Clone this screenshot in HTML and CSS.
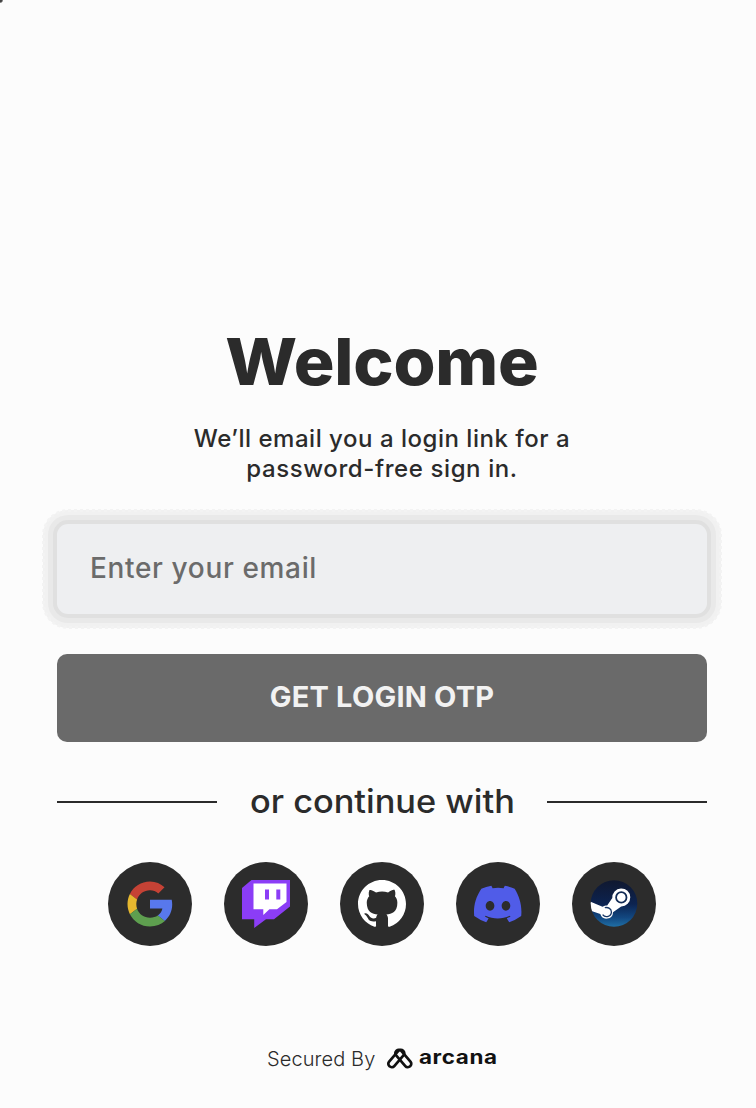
FILE: index.html
```html
<!DOCTYPE html>
<html lang="en">
<head>
<meta charset="utf-8">
<title>Welcome</title>
<link rel="stylesheet" href="styles.css">
</head>
<body>
<main class="login">
  <h1 class="title">Welcome</h1>
  <p class="subtitle"><span class="line-one">We’ll email you a login link for a</span><br><span class="line-two">password-free sign in.</span></p>
  <input class="email" type="email" placeholder="Enter your email" aria-label="Email">
  <button class="submit" type="button"><span>GET LOGIN OTP</span></button>
  <div class="divider"><span class="divider-text">or continue with</span></div>
  <div class="providers">
    <button class="provider" aria-label="Google">
      <svg width="48" height="48" viewBox="0 0 48 48">
        <path fill="#c54235" d="M24 10.2c3.2 0 6 1.1 8.3 3.300l6.200-6.200C34.800 3.800 29.800 1.500 24 1.500 15.200 1.500 7.600 6.500 3.900 13.900l7.200 5.600c1.700-5.400 6.900-9.300 12.900-9.300z"/>
        <path fill="#5878ec" d="M46.200 24.500c0-1.700-.2-3.300-.5-4.800H24v8.900h12.400c-.5 3-2.100 5.300-4.600 6.900l7 5.500c4.600-4.200 7.400-9.800 7.400-16.500z"/>
        <path fill="#e6b82f" d="M11.100 28.700c-.5-1.500-.8-3-.8-4.700s.3-3.200.8-4.600L3.900 13.900C2.400 16.900 1.500 20.300 1.500 24s.9 7.100 2.400 10.200z"/>
        <path fill="#5e9f4f" d="M24 46.500c6.100 0 11.200-2 14.900-5.400l-7.100-5.600c-2 1.400-4.500 2.200-7.800 2.200-6.100 0-11.200-3.800-12.900-9l-7.200 5.500C7.600 41.500 15.200 46.500 24 46.500z"/>
      </svg>
    </button>
    <button class="provider" aria-label="Twitch">
      <svg width="48" height="48" viewBox="0 0 48 48">
        <path fill="#8b3df6" d="M9.500 0H48v26.500L32 39.300h-8L12.200 48v-8.700H0V8z"/>
        <path fill="#fff" d="M11.500 3.500h33v18.500l-9.500 7.300h-7.600L21.300 35v-5.700h-9.800z"/>
        <path fill="#8b3df6" d="M23 9.500h4v10h-4zM34.300 9.500h4v10h-4z"/>
      </svg>
    </button>
    <button class="provider" aria-label="GitHub">
      <svg width="48" height="48" viewBox="0 0 16 16">
        <path fill="#fff" d="M8 0C3.580 0 0 3.580 0 8c0 3.540 2.290 6.530 5.470 7.590.4.070.55-.17.55-.38 0-.19-.01-.82-.01-1.490-2.010.37-2.530-.49-2.690-.94-.09-.23-.48-.94-.82-1.130-.28-.15-.68-.52-.01-.53.63-.01 1.080.58 1.230.82.720 1.210 1.870.870 2.330.660.070-.52.280-.87.510-1.070-1.780-.2-3.640-.89-3.640-3.950 0-.87.310-1.590.820-2.150-.08-.2-.36-1.020.080-2.120 0 0 .67-.21 2.200.820.640-.18 1.320-.27 2-.27s1.360.09 2 .27c1.530-1.040 2.200-.82 2.200-.82.440 1.100.160 1.920.080 2.120.510.560.820 1.270.820 2.150 0 3.070-1.870 3.750-3.650 3.950.290.250.540.730.540 1.480 0 1.070-.01 1.930-.01 2.200 0 .210.150.460.550.380A8.010 8.010 0 0 0 16 8c0-4.420-3.580-8-8-8z"/>
      </svg>
    </button>
    <button class="provider" aria-label="Discord">
      <svg width="48" height="48" viewBox="0 0 24 24">
        <path fill="#505ce8" d="M20.317 4.370a19.800 19.800 0 0 0-4.885-1.515c-.27.37-.47.86-.64 1.250a18.300 18.300 0 0 0-5.500 0c-.16-.4-.37-.88-.63-1.250A19.700 19.700 0 0 0 3.677 4.370C.533 9.046-.32 13.580.1 18.058a19.900 19.900 0 0 0 6 3.030c.46-.63.87-1.300 1.220-2a13 13 0 0 1-1.870-.89l.37-.3c3.930 1.800 8.180 1.800 12.060 0l.38.3c-.6.350-1.220.640-1.880.890.360.700.770 1.360 1.230 2a19.800 19.800 0 0 0 6-3.030c.500-5.180-.84-9.680-3.293-13.688zM8.020 15.330c-1.180 0-2.160-1.080-2.160-2.420s.96-2.420 2.160-2.420c1.210 0 2.180 1.100 2.160 2.420 0 1.340-.96 2.420-2.160 2.420zm7.970 0c-1.180 0-2.150-1.080-2.150-2.420s.95-2.420 2.150-2.420c1.210 0 2.180 1.100 2.160 2.420 0 1.340-.95 2.420-2.160 2.420z"/>
      </svg>
    </button>
    <button class="provider" aria-label="Steam">
      <svg width="48" height="48" viewBox="0 0 48 48">
        <defs>
          <linearGradient id="steam-sky" x1="0" y1="0" x2="0" y2="1"><stop offset="0" stop-color="#10182f"/><stop offset=".5" stop-color="#0c2350"/><stop offset=".78" stop-color="#124780"/><stop offset="1" stop-color="#2175ab"/></linearGradient>
          <clipPath id="steam-disc"><circle cx="24" cy="23.500" r="23.300"/></clipPath>
        </defs>
        <g clip-path="url(#steam-disc)">
          <path fill="url(#steam-sky)" d="M0 0h48v48H0z"/>
          <path fill="#fff" d="M0 21.500l12.500 5.200c1.500-1 3-1.300 4.700-1.300L22.300 18a9 9 0 1 1 8.900 8.400L23 32.200a6.500 6.500 0 0 1-12.700 1.900L0 30.500z"/>
          <path fill="none" stroke="#173665" stroke-width="1.300" d="M14.800 27.700c3.500-.9 6.600 1.200 6.600 4.300 0 4.400-5.800 6.400-8.800 2.700"/>
          <circle cx="31.300" cy="17.400" r="5.200" fill="#fff" stroke="#122b55" stroke-width="1.800"/>
        </g>
      </svg>
    </button>
  </div>
  <footer class="footer">
    <span class="secured">Secured By</span>
    <svg class="logo" width="28" height="22" viewBox="0 0 28 22">
      <g fill="none" stroke="#111" stroke-width="2.700" stroke-linejoin="round">
        <rect x="-3.400" y="-10.400" width="6.800" height="20.800" rx="3.400" transform="translate(10.300 10.500) rotate(41)"/>
        <rect x="-3.400" y="-10.400" width="6.800" height="20.800" rx="3.400" transform="translate(17.300 10.500) rotate(-41)"/>
      </g>
    </svg>
    <span class="brand">arcana</span>
  </footer>
</main>
</body>
</html>
```
FILE: styles.css
```css
* { box-sizing: border-box; }
body {
  margin: 0;
  height: 1108px;
  overflow: hidden;
  background: radial-gradient(circle at 0 0, #444 0 2px, #fcfcfc 3.500px);
  color: #2b2b2b;
  font-family: Inter, "Noto Sans", sans-serif;
}
.login {
  display: flex;
  flex-direction: column;
  width: 650px;
  margin-left: 57px;
  padding-top: 322px;
}
.title {
  margin: 0;
  height: 80px;
  font-size: 65px;
  line-height: 80px;
  font-weight: 800;
  text-align: center;
  transform: scaleX(1.045);
  letter-spacing: -.2px;
}
.subtitle {
  margin: 22px 0 0;
  height: 60px;
  font-size: 24px;
  line-height: 30px;
  font-weight: 480;
  text-align: center;
  white-space: nowrap;
}
.line-one { letter-spacing: .52px; }
.line-two { letter-spacing: .6px; }
.email {
  margin: 40px 0 0;
  width: 650px;
  height: 90px;
  padding: 0 33px 2px;
  border: 0;
  border-radius: 11px;
  background: #eeeff1;
  box-shadow: 0 0 0 4px #e0e0e0, 0 0 0 9px #e9e9e9, 0 0 0 14px #f1f1f1;
  outline: 3px dotted #f3f3f3;
  outline-offset: 12.500px;
  font: 500 28px Inter, sans-serif;
  letter-spacing: .65px;
  color: #2b2b2b;
}
.email::placeholder { color: #6b6b6b; opacity: 1; }
.submit {
  margin: 40px 0 0;
  height: 88px;
  padding: 0 0 4px;
  border: 0;
  border-radius: 10px;
  background: #6a6a6a;
  color: #f2f2f2;
  font: 700 29px Inter, sans-serif;
  letter-spacing: .2px;
}
.divider {
  display: flex;
  align-items: center;
  justify-content: space-between;
  height: 60px;
  margin-top: 30px;
}
.divider::before, .divider::after {
  content: "";
  width: 160px;
  height: 2px;
  background: #2b2b2b;
}
.divider-text {
  font-size: 32px;
  line-height: 40px;
  font-weight: 450;
  transform: scaleX(1.073);
  white-space: nowrap;
}
.providers {
  display: flex;
  justify-content: center;
  gap: 32px;
  margin-top: 30px;
}
.provider {
  display: grid;
  place-items: center;
  width: 84px;
  height: 84px;
  padding: 0;
  border: 0;
  border-radius: 50%;
  background: #2c2c2c;
}
.footer {
  display: flex;
  align-items: center;
  height: 30px;
  margin: 98px 0 0 210px;
}
.secured { width: 119px; font-size: 20px; font-weight: 350; letter-spacing: .1px; }
.logo { flex: none; }
.brand {
  margin: -4px 0 0 4.500px;
  color: #111;
  font-size: 19px;
  font-weight: 750;
  letter-spacing: .5px;
  transform: scaleX(1.18);
  transform-origin: left center;
}
```
